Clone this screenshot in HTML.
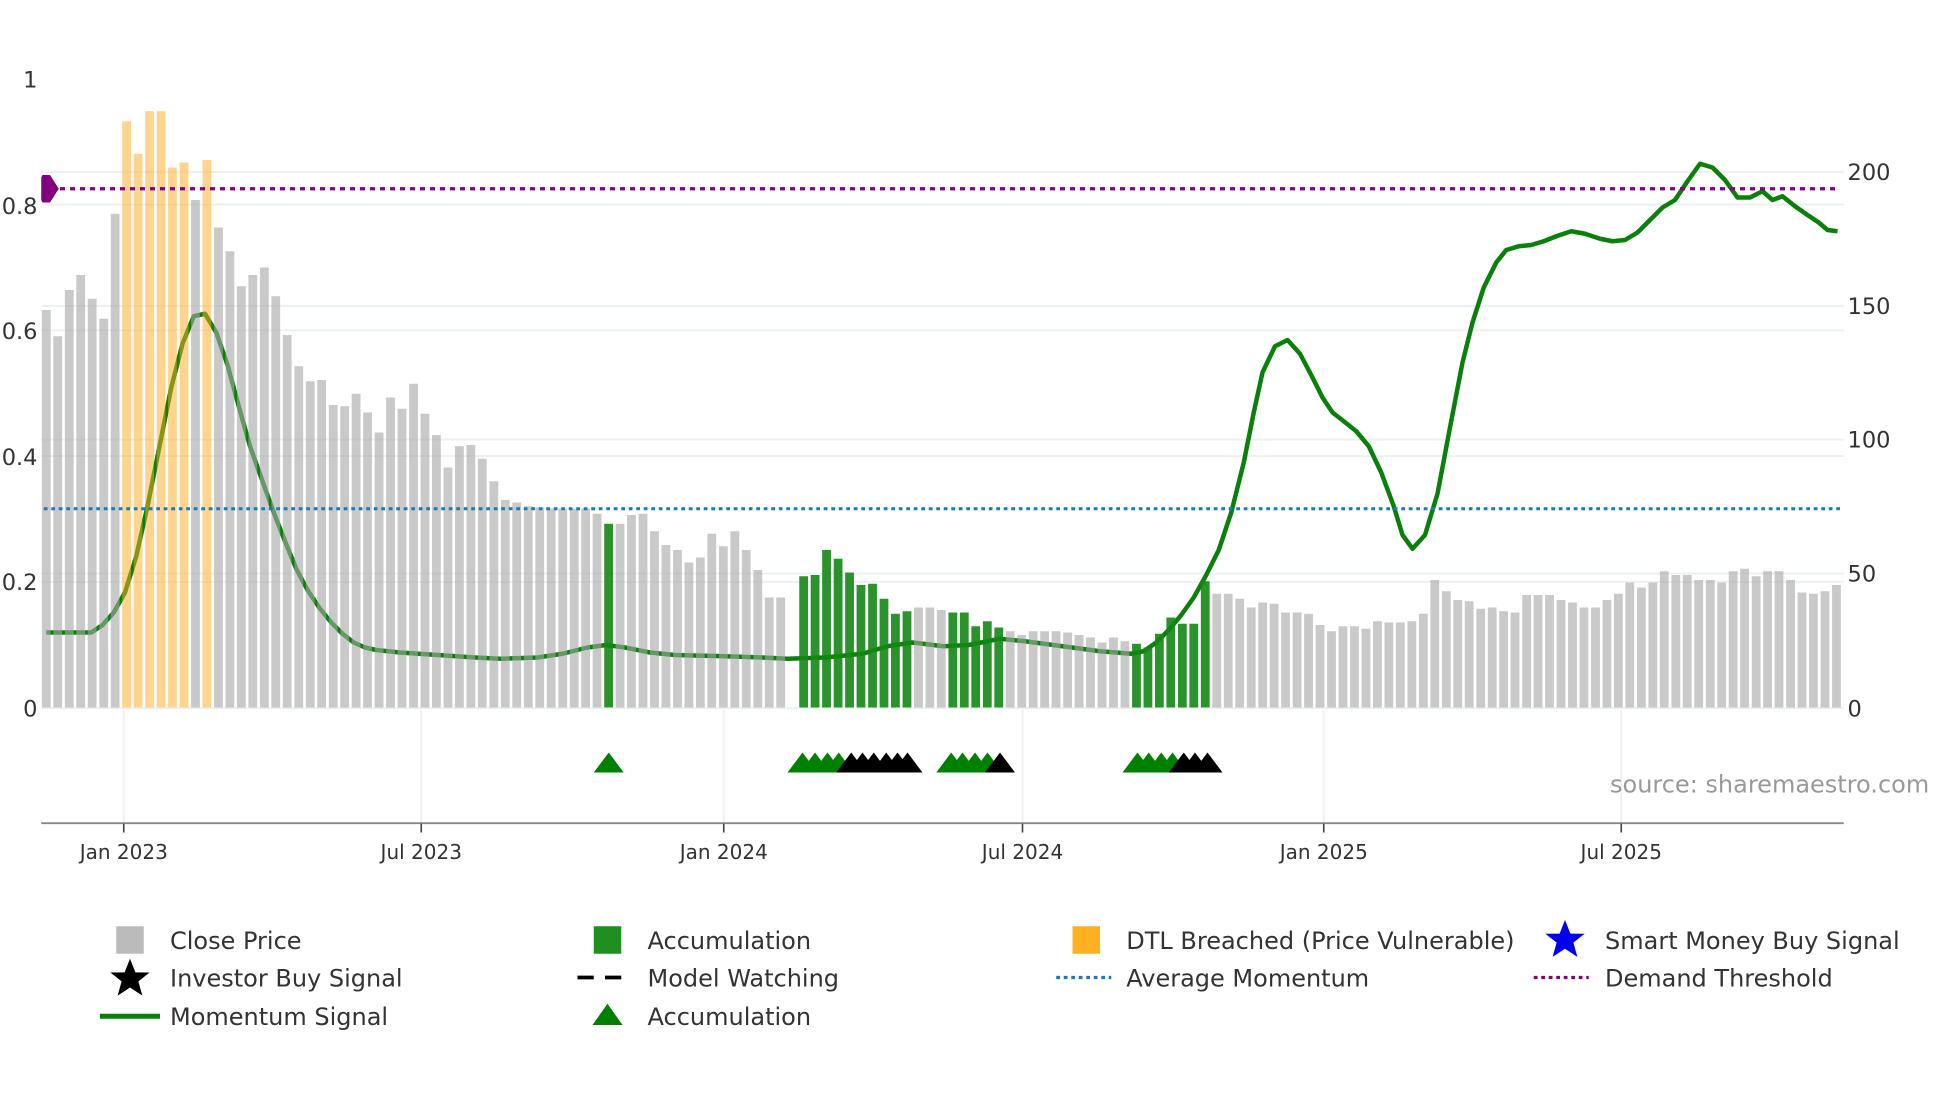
<!DOCTYPE html>
<html><head><meta charset="utf-8"><style>
html,body{margin:0;padding:0;background:#fff;}
svg{display:block;font-family:"DejaVu Sans","Liberation Sans",sans-serif;}
</style></head><body>
<svg width="1960" height="1102" viewBox="0 0 1568 881.6" xmlns="http://www.w3.org/2000/svg">
<rect width="1568" height="881.6" fill="#fff"/>
<g stroke="#eceff3" stroke-width="1.5">
<line x1="33" y1="465.4" x2="1475" y2="465.4"/><line x1="33" y1="364.8" x2="1475" y2="364.8"/>
<line x1="33" y1="264.2" x2="1475" y2="264.2"/><line x1="33" y1="163.6" x2="1475" y2="163.6"/>
<line x1="33" y1="137.6" x2="1475" y2="137.6"/><line x1="33" y1="244.8" x2="1475" y2="244.8"/>
<line x1="33" y1="351.6" x2="1475" y2="351.6"/><line x1="33" y1="458.8" x2="1475" y2="458.8"/>
<line x1="33" y1="566.5" x2="1475" y2="566.5"/>
<line x1="99" y1="568" x2="99" y2="658"/><line x1="337" y1="568" x2="337" y2="658"/>
<line x1="579" y1="568" x2="579" y2="658"/><line x1="818" y1="568" x2="818" y2="658"/>
<line x1="1059" y1="568" x2="1059" y2="658"/><line x1="1297" y1="568" x2="1297" y2="658"/>
</g>
<polyline fill="none" stroke="#0a800a" stroke-width="3.6" stroke-linejoin="round" points="37,506 73,506 82,500 91,490 100,474 109,445 118,405 127,360 137,310 146,275 155,253 164,251 173,266 182,292 191,325 200,357 210,385 219,410 228,433 237,455 246,472 256,487 265,498 274,507 283,514 292,518 301,520 320,522 350,524 380,526 400,527 430,526 450,523 470,518 485,516 500,518 520,522 540,524 580,525 610,526 630,527 660,526 690,523 710,517 730,514 755,517 775,516 800,511 820,513 850,517 880,521 905,523 915,521 925,514 935,504 945,492 955,478 965,460 975,440 985,410 995,370 1003,330 1010,298 1020,277 1030,272 1040,283 1050,302 1058,318 1066,330 1075,337 1085,345 1095,357 1105,378 1115,405 1122,428 1130,439 1140,428 1150,395 1160,342 1170,290 1178,258 1187,230 1197,210 1205,200 1215,197 1225,196 1235,193 1245,189 1257,185 1268,187 1280,191 1290,193 1300,192 1310,186 1320,176 1330,166 1340,160 1350,145 1360,131 1370,134 1380,144 1390,158 1400,158 1410,153 1418,160 1426,157 1436,165 1446,172 1455,178 1462,184 1470,185"/>
<g transform="translate(33.5,0) scale(1.0055,1) translate(-33.5,0)">
<g fill="rgba(165,165,165,0.6)">
<rect x="33.5" y="248" width="7" height="318"/><rect x="42.6" y="269" width="7" height="297"/><rect x="51.8" y="232" width="7" height="334"/><rect x="60.9" y="220" width="7" height="346"/><rect x="70.0" y="239" width="7" height="327"/><rect x="79.2" y="255" width="7" height="311"/><rect x="88.3" y="171" width="7" height="395"/>
<rect x="152.2" y="160" width="7" height="406"/>
<rect x="170.5" y="182" width="7" height="384"/><rect x="179.6" y="201" width="7" height="365"/><rect x="188.7" y="229" width="7" height="337"/><rect x="197.8" y="220" width="7" height="346"/><rect x="207.0" y="214" width="7" height="352"/><rect x="216.1" y="237" width="7" height="329"/><rect x="225.2" y="268" width="7" height="298"/><rect x="234.4" y="293" width="7" height="273"/><rect x="243.5" y="305" width="7" height="261"/><rect x="252.6" y="304" width="7" height="262"/><rect x="261.8" y="324" width="7" height="242"/><rect x="270.9" y="325" width="7" height="241"/><rect x="280.0" y="315" width="7" height="251"/><rect x="289.1" y="330" width="7" height="236"/><rect x="298.3" y="346" width="7" height="220"/><rect x="307.4" y="318" width="7" height="248"/><rect x="316.5" y="327" width="7" height="239"/><rect x="325.7" y="307" width="7" height="259"/><rect x="334.8" y="331" width="7" height="235"/><rect x="343.9" y="348" width="7" height="218"/><rect x="353.1" y="374" width="7" height="192"/><rect x="362.2" y="357" width="7" height="209"/><rect x="371.3" y="356" width="7" height="210"/><rect x="380.4" y="367" width="7" height="199"/><rect x="389.6" y="385" width="7" height="181"/><rect x="398.7" y="400" width="7" height="166"/><rect x="407.8" y="402" width="7" height="164"/><rect x="417.0" y="405" width="7" height="161"/><rect x="426.1" y="406" width="7" height="160"/><rect x="435.2" y="407" width="7" height="159"/><rect x="444.4" y="407" width="7" height="159"/><rect x="453.5" y="407" width="7" height="159"/><rect x="462.6" y="407" width="7" height="159"/><rect x="471.7" y="411" width="7" height="155"/>
<rect x="490.0" y="419" width="7" height="147"/><rect x="499.1" y="412" width="7" height="154"/><rect x="508.3" y="411" width="7" height="155"/><rect x="517.4" y="425" width="7" height="141"/><rect x="526.5" y="436" width="7" height="130"/><rect x="535.7" y="440" width="7" height="126"/><rect x="544.8" y="450" width="7" height="116"/><rect x="553.9" y="446" width="7" height="120"/><rect x="563.0" y="427" width="7" height="139"/><rect x="572.2" y="437" width="7" height="129"/><rect x="581.3" y="425" width="7" height="141"/><rect x="590.4" y="440" width="7" height="126"/><rect x="599.6" y="456" width="7" height="110"/><rect x="608.7" y="478" width="7" height="88"/><rect x="617.8" y="478" width="7" height="88"/>
<rect x="727.4" y="486" width="7" height="80"/><rect x="736.5" y="486" width="7" height="80"/><rect x="745.6" y="488" width="7" height="78"/>
<rect x="800.4" y="505" width="7" height="61"/><rect x="809.6" y="508" width="7" height="58"/><rect x="818.7" y="505" width="7" height="61"/><rect x="827.8" y="505" width="7" height="61"/><rect x="836.9" y="505" width="7" height="61"/><rect x="846.1" y="506" width="7" height="60"/><rect x="855.2" y="508" width="7" height="58"/><rect x="864.3" y="510" width="7" height="56"/><rect x="873.5" y="514" width="7" height="52"/><rect x="882.6" y="510" width="7" height="56"/><rect x="891.7" y="513" width="7" height="53"/>
<rect x="964.8" y="475" width="7" height="91"/><rect x="973.9" y="475" width="7" height="91"/><rect x="983.0" y="479" width="7" height="87"/><rect x="992.2" y="486" width="7" height="80"/><rect x="1001.3" y="482" width="7" height="84"/><rect x="1010.4" y="483" width="7" height="83"/><rect x="1019.5" y="490" width="7" height="76"/><rect x="1028.7" y="490" width="7" height="76"/><rect x="1037.8" y="491" width="7" height="75"/><rect x="1046.9" y="500" width="7" height="66"/><rect x="1056.1" y="505" width="7" height="61"/><rect x="1065.2" y="501" width="7" height="65"/><rect x="1074.3" y="501" width="7" height="65"/><rect x="1083.5" y="503" width="7" height="63"/><rect x="1092.6" y="497" width="7" height="69"/><rect x="1101.7" y="498" width="7" height="68"/><rect x="1110.8" y="498" width="7" height="68"/><rect x="1120.0" y="497" width="7" height="69"/><rect x="1129.1" y="491" width="7" height="75"/><rect x="1138.2" y="464" width="7" height="102"/><rect x="1147.4" y="473" width="7" height="93"/><rect x="1156.5" y="480" width="7" height="86"/><rect x="1165.6" y="481" width="7" height="85"/><rect x="1174.8" y="487" width="7" height="79"/><rect x="1183.9" y="486" width="7" height="80"/><rect x="1193.0" y="489" width="7" height="77"/><rect x="1202.1" y="490" width="7" height="76"/><rect x="1211.3" y="476" width="7" height="90"/><rect x="1220.4" y="476" width="7" height="90"/><rect x="1229.5" y="476" width="7" height="90"/><rect x="1238.7" y="480" width="7" height="86"/><rect x="1247.8" y="482" width="7" height="84"/><rect x="1256.9" y="486" width="7" height="80"/><rect x="1266.1" y="486" width="7" height="80"/><rect x="1275.2" y="480" width="7" height="86"/><rect x="1284.3" y="475" width="7" height="91"/><rect x="1293.4" y="466" width="7" height="100"/><rect x="1302.6" y="470" width="7" height="96"/><rect x="1311.7" y="466" width="7" height="100"/><rect x="1320.8" y="457" width="7" height="109"/><rect x="1330.0" y="460" width="7" height="106"/><rect x="1339.1" y="460" width="7" height="106"/><rect x="1348.2" y="464" width="7" height="102"/><rect x="1357.4" y="464" width="7" height="102"/><rect x="1366.5" y="466" width="7" height="100"/><rect x="1375.6" y="457" width="7" height="109"/><rect x="1384.7" y="455" width="7" height="111"/><rect x="1393.9" y="461" width="7" height="105"/><rect x="1403.0" y="457" width="7" height="109"/><rect x="1412.1" y="457" width="7" height="109"/><rect x="1421.3" y="464" width="7" height="102"/><rect x="1430.4" y="474" width="7" height="92"/><rect x="1439.5" y="475" width="7" height="91"/><rect x="1448.7" y="473" width="7" height="93"/><rect x="1457.8" y="468" width="7" height="98"/>
</g>
<g fill="rgba(255,170,30,0.5)">
<rect x="97.4" y="97" width="7" height="469"/><rect x="106.5" y="123" width="7" height="443"/><rect x="115.7" y="89" width="7" height="477"/><rect x="124.8" y="89" width="7" height="477"/><rect x="133.9" y="134" width="7" height="432"/><rect x="143.1" y="130" width="7" height="436"/><rect x="161.3" y="128" width="7" height="438"/>
</g>
<g fill="rgba(20,135,20,0.9)">
<rect x="480.9" y="419" width="7" height="147"/>
<rect x="636.1" y="461" width="7" height="105"/><rect x="645.2" y="460" width="7" height="106"/><rect x="654.3" y="440" width="7" height="126"/><rect x="663.5" y="447" width="7" height="119"/><rect x="672.6" y="458" width="7" height="108"/><rect x="681.7" y="468" width="7" height="98"/><rect x="690.9" y="467" width="7" height="99"/><rect x="700.0" y="479" width="7" height="87"/><rect x="709.1" y="491" width="7" height="75"/><rect x="718.3" y="489" width="7" height="77"/>
<rect x="754.8" y="490" width="7" height="76"/><rect x="763.9" y="490" width="7" height="76"/><rect x="773.0" y="501" width="7" height="65"/><rect x="782.2" y="497" width="7" height="69"/><rect x="791.3" y="502" width="7" height="64"/>
<rect x="900.9" y="515" width="7" height="51"/><rect x="910.0" y="518" width="7" height="48"/><rect x="919.1" y="507" width="7" height="59"/><rect x="928.2" y="494" width="7" height="72"/><rect x="937.4" y="499" width="7" height="67"/><rect x="946.5" y="499" width="7" height="67"/><rect x="955.6" y="465" width="7" height="101"/>
</g>
</g>
<line x1="40" y1="151" x2="1472" y2="151" stroke="#800080" stroke-width="2.6" stroke-dasharray="4,4"/>
<polygon points="33,142 34,140 40,140 47,151 40,162 34,162 33,160" fill="#800080"/>
<line x1="35" y1="407" x2="1472" y2="407" stroke="#1f77b4" stroke-width="2.4" stroke-dasharray="3,3"/>
<g fill="#333" font-size="18" text-anchor="end">
<text x="30" y="70">1</text><text x="30" y="171">0.8</text><text x="30" y="271">0.6</text><text x="30" y="372">0.4</text><text x="30" y="472">0.2</text><text x="30" y="573">0</text>
</g>
<g fill="#333" font-size="18">
<text x="1478" y="144">200</text><text x="1478" y="251">150</text><text x="1478" y="358">100</text><text x="1478" y="465">50</text><text x="1478" y="573">0</text>
</g>
<g fill="#008000">
<polygon points="475,618 487,602 499,618"/>
<polygon points="630,618 642,602 654,618"/><polygon points="640,618 652,602 664,618"/><polygon points="650,618 662,602 674,618"/><polygon points="659,618 671,602 683,618"/>
<polygon points="749,618 761,602 773,618"/><polygon points="758,618 770,602 782,618"/><polygon points="768,618 780,602 792,618"/><polygon points="778,618 790,602 802,618"/>
<polygon points="898,618 910,602 922,618"/><polygon points="907,618 919,602 931,618"/><polygon points="917,618 929,602 941,618"/><polygon points="926,618 938,602 950,618"/>
</g>
<g fill="#000">
<polygon points="669,618 681,602 693,618"/><polygon points="678,618 690,602 702,618"/><polygon points="687,618 699,602 711,618"/><polygon points="697,618 709,602 721,618"/><polygon points="706,618 718,602 730,618"/><polygon points="714,618 726,602 738,618"/>
<polygon points="788,618 800,602 812,618"/>
<polygon points="935,618 947,602 959,618"/><polygon points="944,618 956,602 968,618"/><polygon points="954,618 966,602 978,618"/>
</g>
<text x="1288" y="634" font-size="19.2" fill="#999">source: sharemaestro.com</text>
<line x1="33" y1="658.5" x2="1475" y2="658.5" stroke="#888" stroke-width="1.5"/>
<g stroke="#444" stroke-width="1.3">
<line x1="99" y1="659" x2="99" y2="666"/><line x1="337" y1="659" x2="337" y2="666"/><line x1="579" y1="659" x2="579" y2="666"/><line x1="818" y1="659" x2="818" y2="666"/><line x1="1059" y1="659" x2="1059" y2="666"/><line x1="1297" y1="659" x2="1297" y2="666"/>
</g>
<g fill="#333" font-size="16" text-anchor="middle">
<text x="99" y="687">Jan 2023</text><text x="337" y="687">Jul 2023</text><text x="579" y="687">Jan 2024</text><text x="818" y="687">Jul 2024</text><text x="1059" y="687">Jan 2025</text><text x="1297" y="687">Jul 2025</text>
</g>
<g fill="#333" font-size="19.2">
<text x="136" y="759">Close Price</text><text x="518" y="759">Accumulation</text><text x="901" y="759">DTL Breached (Price Vulnerable)</text><text x="1284" y="759">Smart Money Buy Signal</text>
<text x="136" y="789">Investor Buy Signal</text><text x="518" y="789">Model Watching</text><text x="901" y="789">Average Momentum</text><text x="1284" y="789">Demand Threshold</text>
<text x="136" y="820">Momentum Signal</text><text x="518" y="820">Accumulation</text>
</g>
<rect x="93" y="741" width="22" height="22" fill="#bbb"/>
<rect x="475" y="741" width="22" height="22" fill="#1f8f1f"/>
<rect x="858" y="741" width="22" height="22" fill="#ffb020"/>
<polygon fill="#0000ee" points="1252,736 1256.3,746.9 1267.7,747 1258.7,754.1 1261.9,765.5 1252,759 1242.1,765.5 1245.3,754.1 1236.3,747 1247.7,746.9"/>
<polygon fill="#000" points="104,767 108.3,777.9 119.7,778 110.7,785.1 113.9,796.5 104,790 94.1,796.5 97.3,785.1 88.3,778 99.7,777.9"/>
<line x1="462" y1="782" x2="506" y2="782" stroke="#000" stroke-width="3" stroke-dasharray="13,9"/>
<line x1="845" y1="782" x2="889" y2="782" stroke="#1f77b4" stroke-width="2.6" stroke-dasharray="3,3"/>
<line x1="1227" y1="782" x2="1271" y2="782" stroke="#800080" stroke-width="2.6" stroke-dasharray="3,3"/>
<line x1="80" y1="813" x2="128" y2="813" stroke="#0a800a" stroke-width="4"/>
<polygon points="474,820 486,803 498,820" fill="#008000"/>
</svg>
</body></html>
